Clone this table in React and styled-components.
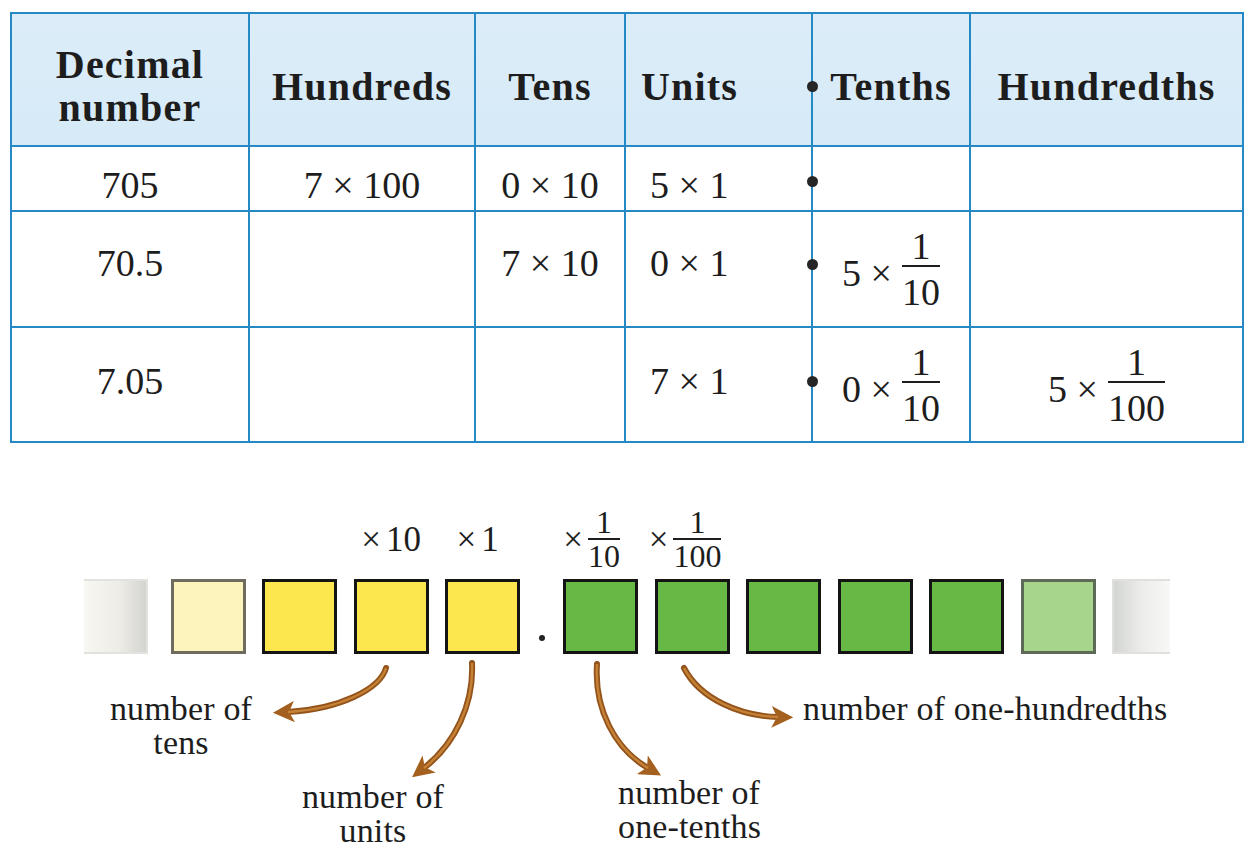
import styled, { createGlobalStyle } from 'styled-components';

const LINE = '#2489c5';
const INK = '#1d1d1d';

const GlobalStyle = createGlobalStyle`
  html, body {
    margin: 0;
    background: #fff;
  }
  body {
    font-family: "Liberation Serif", "Times New Roman", serif;
    color: ${INK};
  }
`;

const Page = styled.div`
  width: 1252px;
  height: 848px;
  overflow: hidden;
  padding-top: 12px;
  box-sizing: border-box;
`;

const Table = styled.table`
  margin-left: 10px;
  width: 1232px;
  border-collapse: collapse;
  table-layout: fixed;
`;

const Col = styled.col`
  width: ${(p) => p.$w}px;
`;

const Row = styled.tr`
  height: ${(p) => p.$h}px;
`;

const HeadCell = styled.th`
  position: relative;
  padding: 13px 0 0 ${(p) => p.$pl || 0}px;
  background: linear-gradient(180deg, #dcedf9 0%, #d6eaf7 100%);
  border: 2px solid ${LINE};
  font-weight: 700;
  font-size: 40px;
  line-height: 43px;
  letter-spacing: 1.2px;
  text-align: ${(p) => p.$align || 'center'};
  vertical-align: middle;
`;

const Cell = styled.td`
  position: relative;
  padding: ${(p) => Math.max(0, p.$shift * 2 || 0)}px 0
    ${(p) => Math.max(0, -(p.$shift || 0) * 2)}px ${(p) => p.$pl || 0}px;
  border: 2px solid ${LINE};
  font-size: 38px;
  line-height: 44px;
  text-align: ${(p) => p.$align || 'center'};
  vertical-align: middle;
  white-space: pre;
`;

const Dot = styled.span`
  position: absolute;
  left: -6.5px;
  top: calc(50% + ${(p) => p.$y || 0}px - 5.5px);
  width: 11px;
  height: 11px;
  border-radius: 50%;
  background: #262626;
`;

const Expr = styled.div`
  display: flex;
  align-items: center;
  justify-content: center;
  gap: 10px;
`;

const Lead = styled.span`
  padding-top: ${(p) => p.$drop || 0}px;
  font-size: 38px;
  line-height: 1;
  white-space: pre;
`;

const FracBox = styled.span`
  display: inline-flex;
  flex-direction: column;
  align-items: stretch;
  font-size: ${(p) => p.$size}px;
  line-height: 1;
`;

const Num = styled.span`
  text-align: center;
  padding: 0 ${(p) => p.$pad}px;
  border-bottom: 2px solid ${INK};
`;

const Den = styled.span`
  text-align: center;
  padding-top: ${(p) => p.$gap}px;
`;

const Frac = ({ n, d, size = 38, pad = 4, gap = 6 }) => (
  <FracBox $size={size}>
    <Num $pad={pad}>{n}</Num>
    <Den $gap={gap}>{d}</Den>
  </FracBox>
);

/* ---------- place value strip ---------- */

const Diagram = styled.div`
  margin-top: 63px;
`;

const Strip = styled.div`
  margin-left: 84px;
  display: grid;
  grid-template-columns: 70px repeat(4, 75px) 10px repeat(6, 75px) 58px;
  grid-template-rows: 66px 75px;
  column-gap: 16.5px;
  row-gap: 7px;
`;

const Label = styled.div`
  grid-row: 1;
  grid-column: ${(p) => p.$col};
  justify-self: center;
  align-self: center;
  margin-right: ${(p) => p.$nudge || 0}px;
  display: flex;
  align-items: center;
  gap: 5px;
  font-size: 35px;
  line-height: 1;
  white-space: nowrap;
`;

const BOXES = {
  fadeL: `
    width: 64px;
    background: linear-gradient(90deg, #f8f7f1 0%, #ecebe6 60%, #d3d3cf 100%);
    border: 2px solid #e2e2de;
    border-left: none;
  `,
  pale: `
    background: #fdf3bc;
    border: 3px solid #6f6b5e;
  `,
  yellow: `
    background: #fce74f;
    border: 3px solid #141414;
  `,
  green: `
    background: #67b845;
    border: 3px solid #141414;
  `,
  lightgreen: `
    background: #a7d58c;
    border: 3px solid #5e6a58;
  `,
  fadeR: `
    background: linear-gradient(90deg, #d3d5d2 0%, #ebece9 45%, #f8f9f7 100%);
    border: 2px solid #e0e1de;
    border-right: none;
  `,
};

const Box = styled.div`
  grid-row: 2;
  box-sizing: border-box;
  height: 75px;
  ${(p) => BOXES[p.$kind]}
`;

const Point = styled.div`
  grid-row: 2;
  align-self: end;
  justify-self: center;
  width: 6px;
  height: 6px;
  margin-bottom: 13px;
  border-radius: 50%;
  background: #222;
`;

const Annotations = styled.div`
  position: relative;
  width: 1252px;
  height: 195px;
`;

const ArrowLayer = styled.svg`
  position: absolute;
  left: 0;
  top: 0;
  overflow: visible;
`;

const Note = styled.div`
  position: absolute;
  left: ${(p) => p.$x}px;
  top: ${(p) => p.$y}px;
  width: ${(p) => (p.$w ? `${p.$w}px` : 'auto')};
  font-size: 34px;
  line-height: 34px;
  letter-spacing: 0.15px;
  text-align: ${(p) => p.$align || 'left'};
  white-space: nowrap;
`;

const ARROWS = [
  'M386,14 C380,35 340,55 288,58',
  'M472,9 C474,50 455,90 424,114',
  'M597,10 C594,55 615,95 648,114',
  'M684,14 C700,45 740,62 778,63',
];

const STRIP = ['fadeL', 'pale', 'yellow', 'yellow', 'yellow'];
const STRIP_R = ['green', 'green', 'green', 'green', 'green', 'lightgreen', 'fadeR'];

export default function App() {
  return (
    <>
      <GlobalStyle />
      <Page>
        <Table>
          <colgroup>
            {[238, 226, 150, 187, 158, 273].map((w, i) => (
              <Col key={i} $w={w} />
            ))}
          </colgroup>
          <thead>
            <Row $h={133}>
              <HeadCell>
                Decimal
                <br />
                number
              </HeadCell>
              <HeadCell>Hundreds</HeadCell>
              <HeadCell>Tens</HeadCell>
              <HeadCell $align="left" $pl={15}>
                Units
              </HeadCell>
              <HeadCell>
                <Dot $y={6.5} />
                Tenths
              </HeadCell>
              <HeadCell>Hundredths</HeadCell>
            </Row>
          </thead>
          <tbody>
            <Row $h={65}>
              <Cell $shift={6}>705</Cell>
              <Cell $shift={6}>7 × 100</Cell>
              <Cell $shift={6}>0 × 10</Cell>
              <Cell $shift={6} $align="left" $pl={24}>
                5 × 1
              </Cell>
              <Cell>
                <Dot $y={2.5} />
              </Cell>
              <Cell />
            </Row>
            <Row $h={116}>
              <Cell $shift={-6}>70.5</Cell>
              <Cell />
              <Cell $shift={-6}>7 × 10</Cell>
              <Cell $shift={-6} $align="left" $pl={24}>
                0 × 1
              </Cell>
              <Cell>
                <Dot $y={-5} />
                <Expr>
                  <Lead $drop={8}>5 ×</Lead>
                  <Frac n="1" d="10" />
                </Expr>
              </Cell>
              <Cell />
            </Row>
            <Row $h={115}>
              <Cell $shift={-3.5}>7.05</Cell>
              <Cell />
              <Cell />
              <Cell $shift={-3.5} $align="left" $pl={24}>
                7 × 1
              </Cell>
              <Cell>
                <Dot $y={-3.5} />
                <Expr>
                  <Lead $drop={8}>0 ×</Lead>
                  <Frac n="1" d="10" />
                </Expr>
              </Cell>
              <Cell>
                <Expr>
                  <Lead $drop={8}>5 ×</Lead>
                  <Frac n="1" d="100" pad={5} />
                </Expr>
              </Cell>
            </Row>
          </tbody>
        </Table>

        <Diagram>
          <Strip>
            <Label $col={4}>
              <span>×</span>
              <span>10</span>
            </Label>
            <Label $col={5} $nudge={10}>
              <span>×</span>
              <span>1</span>
            </Label>
            <Label $col={7} $nudge={18}>
              <span>×</span>
              <Frac n="1" d="10" size={32} pad={0} gap={0} />
            </Label>
            <Label $col={8} $nudge={14}>
              <span>×</span>
              <Frac n="1" d="100" size={32} pad={0} gap={0} />
            </Label>

            {STRIP.map((k, i) => (
              <Box key={`l${i}`} $kind={k} />
            ))}
            <Point />
            {STRIP_R.map((k, i) => (
              <Box key={`r${i}`} $kind={k} />
            ))}
          </Strip>

          <Annotations>
            <ArrowLayer width="1252" height="195" viewBox="0 0 1252 195">
              <defs>
                <marker
                  id="head"
                  viewBox="0 0 10 10"
                  refX="3"
                  refY="5"
                  markerWidth="3.6"
                  markerHeight="3.6"
                  orient="auto"
                >
                  <path d="M0,0 L10,5 L0,10 L2.5,5 z" fill="#a3601f" />
                </marker>
              </defs>
              {ARROWS.map((d) => (
                <g key={d}>
                  <path
                    d={d}
                    fill="none"
                    stroke="#93531a"
                    strokeWidth="6"
                    strokeLinecap="round"
                    markerEnd="url(#head)"
                  />
                  <path d={d} fill="none" stroke="#c58236" strokeWidth="2.4" />
                </g>
              ))}
            </ArrowLayer>

            <Note $x={81} $y={38} $w={200} $align="center">
              number of
              <br />
              tens
            </Note>
            <Note $x={273} $y={126} $w={200} $align="center">
              number of
              <br />
              units
            </Note>
            <Note $x={618} $y={122}>
              number of
              <br />
              one-tenths
            </Note>
            <Note $x={803} $y={38}>
              number of one-hundredths
            </Note>
          </Annotations>
        </Diagram>
      </Page>
    </>
  );
}
